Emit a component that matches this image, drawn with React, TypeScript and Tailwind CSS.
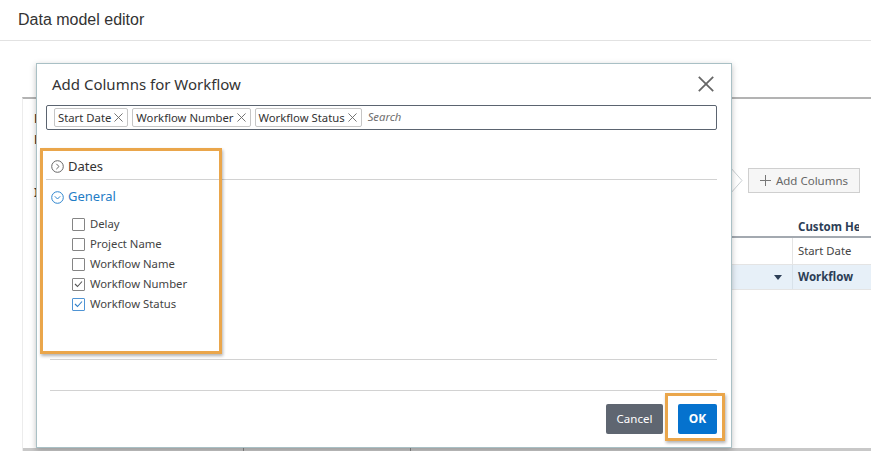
import React from "react";

const F = "font-['Noto_Sans',sans-serif]";

function XIcon({ size = 8, color = "#555", w = 1 }: { size?: number; color?: string; w?: number }) {
  return (
    <svg width={size} height={size} viewBox="0 0 10 10" className="shrink-0">
      <line x1="0.5" y1="0.5" x2="9.5" y2="9.5" stroke={color} strokeWidth={w} />
      <line x1="9.5" y1="0.5" x2="0.5" y2="9.5" stroke={color} strokeWidth={w} />
    </svg>
  );
}

function CircleChevron({ dir, color }: { dir: "right" | "down"; color: string }) {
  return (
    <svg width="13" height="13" viewBox="0 0 13 13" className="shrink-0">
      <circle cx="6.5" cy="6.5" r="5.8" fill="none" stroke={color} strokeWidth="1" />
      {dir === "right" ? (
        <polyline points="5.3,3.8 8,6.5 5.3,9.2" fill="none" stroke={color} strokeWidth="1" />
      ) : (
        <polyline points="3.8,5.3 6.5,8 9.2,5.3" fill="none" stroke={color} strokeWidth="1" />
      )}
    </svg>
  );
}

function Tag({ label }: { label: string }) {
  return (
    <div className="h-[19px] flex items-center gap-[3px] pl-[3px] pr-[4px] border border-[#c6c6c6] rounded-[2px] bg-white text-[11.3px] text-[#333] leading-none">
      <span>{label}</span>
      <XIcon size={9} color="#666" />
    </div>
  );
}

function Check({ label, checked, active }: { label: string; checked?: boolean; active?: boolean }) {
  const border = active ? "border-[#4f94d4]" : "border-[#858585]";
  const mark = active ? "#2f7fc8" : "#555";
  return (
    <div className="h-[20px] flex items-center pl-[26px]">
      <div className={`w-[13px] h-[13px] border ${border} rounded-[1px] bg-white flex items-center justify-center`}>
        {checked && (
          <svg width="9" height="8" viewBox="0 0 9 8">
            <polyline points="1,4 3.5,6.5 8,1.5" fill="none" stroke={mark} strokeWidth="1.1" />
          </svg>
        )}
      </div>
      <span className="ml-[5px] text-[11.3px] text-[#444]">{label}</span>
    </div>
  );
}

export default function App() {
  return (
    <div className="relative w-[871px] h-[451px] overflow-hidden bg-white">
      {/* page header */}
      <header className="h-[41px] border-b border-[#e2e2e2] pl-[18px] flex items-center font-['Liberation_Sans',Arial,sans-serif] text-[16px] text-[#333]">
        Data model editor
      </header>

      {/* background panel */}
      <div className="ml-[22px] mt-[56px] h-[354px] border-t-2 border-t-[#b3b3b3] border-l border-l-[#ececec] flex flex-col font-['Noto_Sans',sans-serif]">
        <div className="flex-1 flex min-h-0">
          <div className="w-[11px] shrink-0" />
          <div className="flex-1 min-w-0 flex flex-col">
            <div className="h-[69px] relative">
              <div className="absolute left-0 top-[10px] text-[13px] font-bold text-[#333]">Label</div>
              <div className="absolute left-0 top-[31px] text-[13px] font-bold text-[#333]">Description</div>
              <div className="absolute left-0 top-[84px] text-[13px] font-bold text-[#333]">Item</div>
            </div>
            <div className="flex justify-end pr-[11px]">
              <div className="w-[112px] h-[25px] shrink-0 border border-[#cfcfcf] bg-[#f6f6f6] flex items-center justify-center gap-[5px] text-[11.5px] text-[#666]">
                <svg width="11" height="11" viewBox="0 0 11 11">
                  <line x1="5.5" y1="0" x2="5.5" y2="11" stroke="#777" strokeWidth="1" />
                  <line x1="0" y1="5.5" x2="11" y2="5.5" stroke="#777" strokeWidth="1" />
                </svg>
                <span>Add Columns</span>
              </div>
            </div>
            <div className="h-[25px]" />
            {/* table */}
            <div className="flex flex-col ml-[200px]">
              <div className="h-[20px] flex border-b-2 border-[#a3a9b0]">
                <div className="w-[559px] shrink-0" />
                <div className="w-[66px] shrink-0 pl-[5px] text-[11.5px] font-bold text-[#2c3e56] whitespace-nowrap overflow-hidden">Custom Header</div>
                <div className="flex-1" />
              </div>
              <div className="h-[27px] flex border-b border-[#e4e4e4]">
                <div className="w-[559px] shrink-0 border-r border-[#e4e4e4]" />
                <div className="w-[66px] shrink-0 pl-[5px] flex items-center text-[11.3px] text-[#444] whitespace-nowrap overflow-hidden">Start Date</div>
                <div className="flex-1" />
              </div>
              <div className="h-[25px] flex bg-[#e7f0f8] border-b border-[#e4e4e4]">
                <div className="w-[559px] shrink-0 border-r border-[#d8e2ea] flex items-center justify-end pr-[10px]">
                  <svg width="8" height="5" viewBox="0 0 8 5"><polygon points="0,0 8,0 4,5" fill="#2c3e56" /></svg>
                </div>
                <div className="w-[66px] h-[24px] shrink-0 pl-[5px] leading-[24px] text-[11.5px] font-bold text-[#2c3e56] overflow-hidden">Workflow Status</div>
                <div className="flex-1" />
              </div>
            </div>
          </div>
        </div>
        <div className="h-[3px] shrink-0 bg-[#c8c8c8] flex">
          <div className="w-[221px] border-r border-[#888]" />
          <div className="w-[167px] border-r border-[#888]" />
        </div>
      </div>

      {/* popover pointer */}
      <svg className="absolute left-[730px] top-[167px]" width="14" height="27" viewBox="0 0 14 27">
        <polygon points="0,0 12,13.5 0,27" fill="white" />
        <polyline points="0,0 12,13.5 0,27" fill="none" stroke="#c9cfd2" strokeWidth="1" />
      </svg>

      {/* dialog */}
      <div className={`absolute left-[36px] top-[63px] w-[696px] h-[385px] bg-white border border-[#a9c0c5] shadow-[0_2px_6px_rgba(0,0,0,0.25)] flex flex-col ${F}`}>
        <div className="h-[40px] flex items-center justify-between pl-[15px] pr-[17px]">
          <span className="text-[15px] text-[#333]">Add Columns for Workflow</span>
          <XIcon size={16} color="#666" w={1.1} />
        </div>
        <div className="pl-[9px] pr-[14px] mt-[1px]">
          <div className="h-[25px] border border-[#5b6470] rounded-[2px] flex items-center gap-[4px] pl-[7px]">
            <Tag label="Start Date" />
            <Tag label="Workflow Number" />
            <Tag label="Workflow Status" />
            <span className="ml-[2px] text-[11.3px] italic text-[#6f6f6f]">Search</span>
          </div>
          <div className="h-[24px]" />
          <div className="h-[26px] flex items-center border-b border-[#d2d2d2] pl-[5px]">
            <CircleChevron dir="right" color="#666" />
            <span className="ml-[4px] text-[13px] text-[#333]">Dates</span>
          </div>
          <div className="h-[34px] flex items-center pl-[5px]">
            <CircleChevron dir="down" color="#2f86cf" />
            <span className="ml-[4px] text-[13px] text-[#1f7dc6]">General</span>
          </div>
          <Check label="Delay" />
          <Check label="Project Name" />
          <Check label="Workflow Name" />
          <Check label="Workflow Number" checked />
          <Check label="Workflow Status" checked active />
        </div>
        <div className="flex-1" />
        <div className="ml-[13px] mr-[14px] h-[32px] border-t border-b border-[#d2d2d2]" />
        <div className="h-[56px] flex items-center justify-end gap-[15px] pr-[14px] pb-[1px]">
          <div className="w-[57px] h-[30px] rounded-[2px] bg-[#5f6671] text-white text-[11.5px] flex items-center justify-center">Cancel</div>
          <div className="w-[39px] h-[30px] rounded-[2px] bg-[#0572ce] text-white text-[12px] font-bold flex items-center justify-center">OK</div>
        </div>

        {/* annotation highlights */}
        <div className="absolute left-[3px] top-[84px] w-[182px] h-[206px] border-[3px] border-[#eaa64b] shadow-[1px_2px_3px_rgba(0,0,0,0.3)]" />
        <div className="absolute left-[628px] top-[329px] w-[60px] h-[48px] border-[3px] border-[#eaa64b] shadow-[1px_2px_3px_rgba(0,0,0,0.3)]" />
      </div>
    </div>
  );
}
